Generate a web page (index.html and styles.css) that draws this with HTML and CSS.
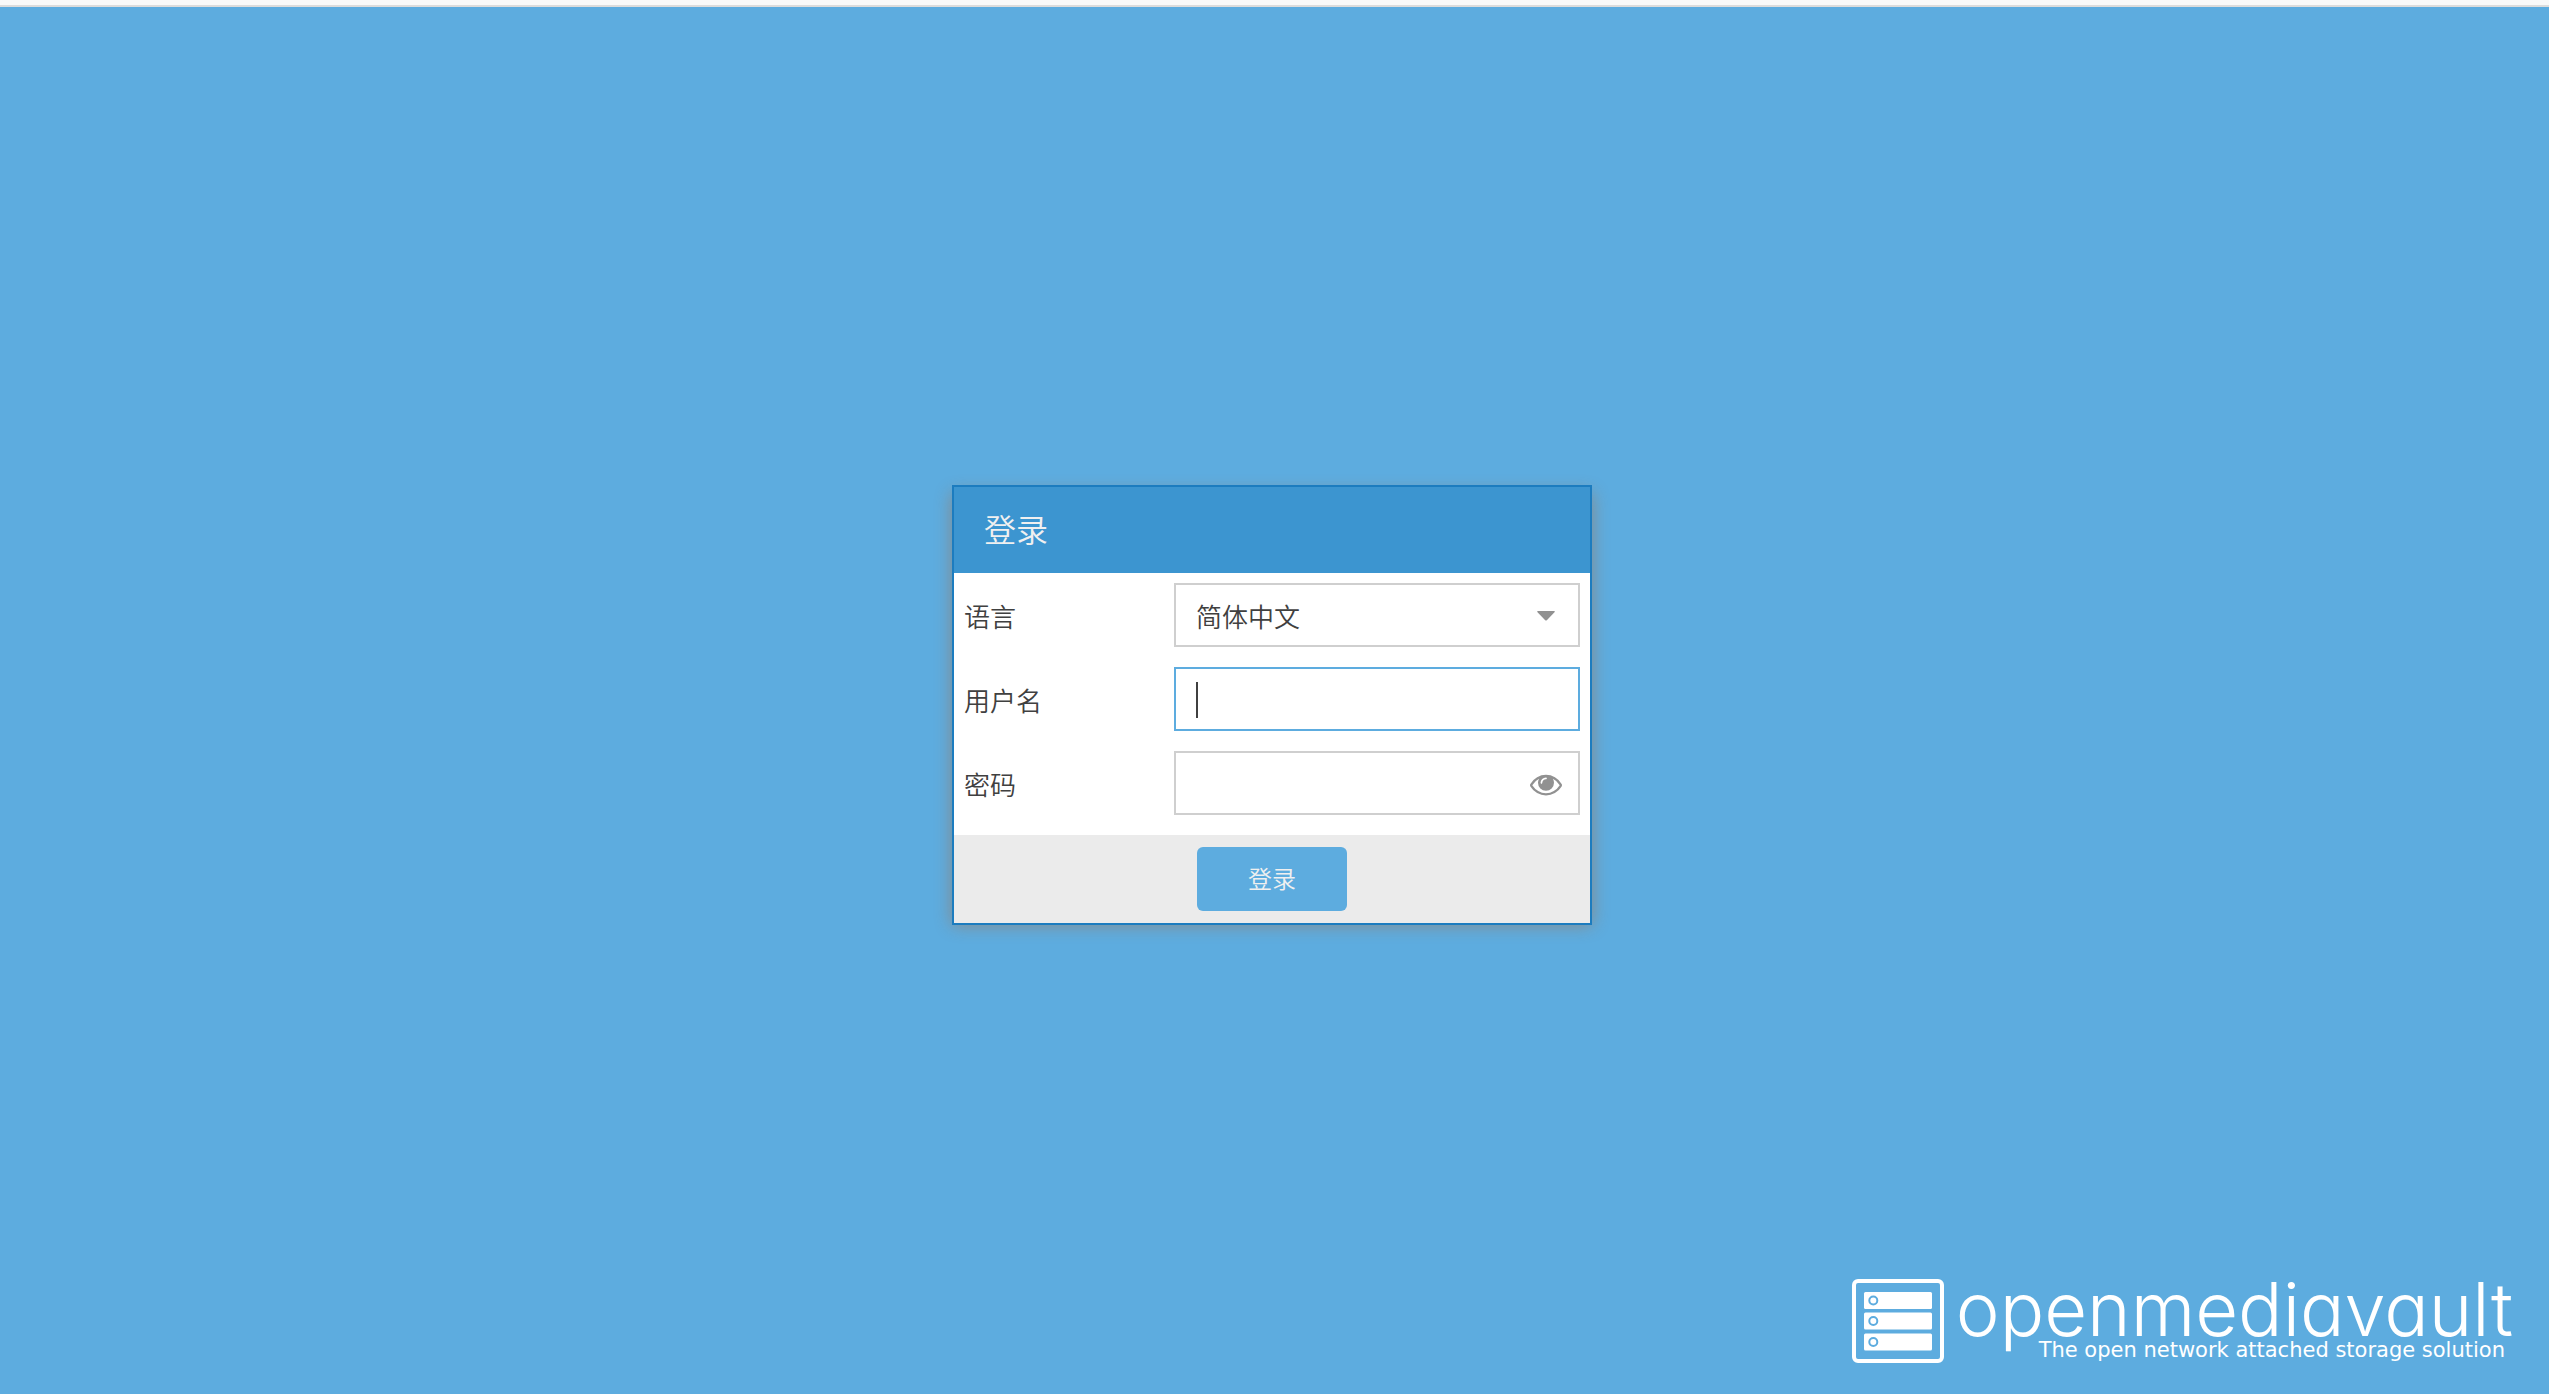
FILE: index.html
```html
<!DOCTYPE html>
<html lang="zh-CN">
<head>
<meta charset="utf-8">
<meta name="viewport" content="width=device-width, initial-scale=1">
<title>openmediavault</title>
<link rel="stylesheet" href="styles.css">
</head>
<body>
<main class="viewport">
  <form class="window">
    <h1 class="window-title">登录</h1>
    <div class="window-body">
      <div class="row">
        <label class="row-label" for="language">语言</label>
        <div class="field">
          <select class="field-input" id="language"><option>简体中文</option></select>
          <svg class="trigger" viewBox="0 0 32 32" aria-hidden="true"><path d="M8 11h16q1.500 0 .5 1.200l-7.700 8q-.8.800-1.600 0l-7.700-8q-1-1.200.5-1.200z"/></svg>
        </div>
      </div>
      <div class="row">
        <label class="row-label" for="username">用户名</label>
        <div class="field field-focus">
          <input class="field-input" id="username" type="text" autocomplete="off">
        </div>
      </div>
      <div class="row">
        <label class="row-label" for="password">密码</label>
        <div class="field">
          <input class="field-input" id="password" type="password" autocomplete="off">
          <svg class="trigger" viewBox="0 -1536 1792 1792" aria-hidden="true"><path transform="scale(1,-1)" d="M1664 576q-152 236 -381 353q61 -104 61 -225q0 -185 -131.500 -316.500t-316.500 -131.500t-316.500 131.500t-131.500 316.500q0 121 61 225q-229 -117 -381 -353q133 -205 333.500 -326.500t434.500 -121.500t434.500 121.500t333.500 326.500zM944 960q0 20 -14 34t-34 14q-125 0 -214.500 -89.500t-89.500 -214.500q0 -20 14 -34t34 -14t34 14t14 34q0 86 61 147t147 61q20 0 34 14t14 34zM1792 576q0 -34 -20 -69q-140 -230 -376.500 -368.500t-499.500 -138.500t-499.500 139t-376.500 368q-20 35 -20 69t20 69q140 229 376.500 368t499.500 139t499.500 -139t376.500 -368q20 -35 20 -69z"/></svg>
        </div>
      </div>
    </div>
    <div class="window-footer"><button class="submit" type="button">登录</button></div>
  </form>
  <div class="brand">
    <svg class="brand-icon" viewBox="0 0 92 84" aria-hidden="true">
      <rect x="2" y="2" width="88" height="80" rx="4" fill="none" stroke="#fff" stroke-width="4"/>
      <g fill="#fff"><rect x="12" y="13" width="68" height="17" rx="1.500"/><rect x="12" y="33.500" width="68" height="17" rx="1.500"/><rect x="12" y="54.500" width="68" height="17" rx="1.500"/></g>
      <g fill="none" stroke="#5dacdf" stroke-width="2"><circle cx="21.300" cy="21.500" r="4"/><circle cx="21.300" cy="42" r="4"/><circle cx="21.300" cy="63" r="4"/></g>
    </svg>
    <div class="brand-text">
      <div class="brand-name">openmediavault</div>
      <div class="brand-tagline">The open network attached storage solution</div>
    </div>
  </div>
</main>
</body>
</html>
```
FILE: styles.css
```css
* { box-sizing: border-box; }

body {
  margin: 0;
  min-height: 100vh;
  display: flex;
  flex-direction: column;
  border-top: 5px solid #f9f9f9;
  background: #5dacdf;
  color: #404040;
  font: 350 26px/36px "Noto Sans CJK SC", sans-serif;
}

.viewport {
  flex: 1;
  display: grid;
  isolation: isolate;
  border-top: 2px solid #dcdcdc;
}

.window, .brand { grid-area: 1 / 1; }

.window {
  position: relative;
  place-self: center;
  width: 640px;
  max-width: 100%;
  margin: 9px 5px 0 0;
  border: 2px solid #1c7cbf;
  background: #fff;
}

/* shadow that starts a little below the top edge */
.window::before {
  content: "";
  position: absolute;
  inset: 6px -2px -2px;
  z-index: -1;
  box-shadow: 0 0 16px #888;
}

.window-title {
  margin: 0;
  padding: 18px 30px 22px;
  background: #3c95d0;
  color: #f0f0f0;
  font-size: 32px;
  font-weight: 350;
  line-height: 46px;
}

.window-body { padding: 0 10px 10px; }

.row {
  display: flex;
  align-items: center;
  padding: 10px 0;
}

.row-label {
  width: 210px;
  padding-top: 2px;
}

.field {
  flex: 1;
  display: flex;
  align-items: center;
  height: 64px;
  padding-right: 16px;
  border: 2px solid #cfcfcf;
  background: #fff;
}

.field-focus { border-color: #5dacdf; }

.field-input {
  flex: 1;
  min-width: 0;
  height: 60px;
  padding: 2px 20px 0;
  border: 0;
  outline: 0;
  appearance: none;
  background: none;
  color: inherit;
  font: inherit;
}

/* text cursor of the focused field */
.field-focus .field-input {
  background: linear-gradient(#404040, #404040) 20px 13px / 2px 36px no-repeat;
}

.trigger {
  width: 32px;
  height: 34px;
  padding-top: 2px;
  fill: #919191;
}

.window-footer {
  display: flex;
  justify-content: center;
  padding: 12px;
  background: #ebebeb;
}

.submit {
  width: 150px;
  height: 64px;
  padding: 0 0 2px;
  border: 0;
  border-radius: 6px;
  background: #5dacdf;
  color: #f0f0f0;
  font: inherit;
  font-size: 24px;
}

.brand {
  place-self: end;
  display: flex;
  align-items: flex-start;
  gap: 12px;
  padding: 0 36px 31px 0;
  color: #fff;
}

.brand-icon { width: 92px; height: 84px; }

.brand-name {
  font: 300 74px/60px Inter, sans-serif;
  font-feature-settings: "cv11";
}

.brand-tagline {
  padding-right: 8px;
  font: 21px/22px "DejaVu Sans", sans-serif;
  text-align: right;
}
```
